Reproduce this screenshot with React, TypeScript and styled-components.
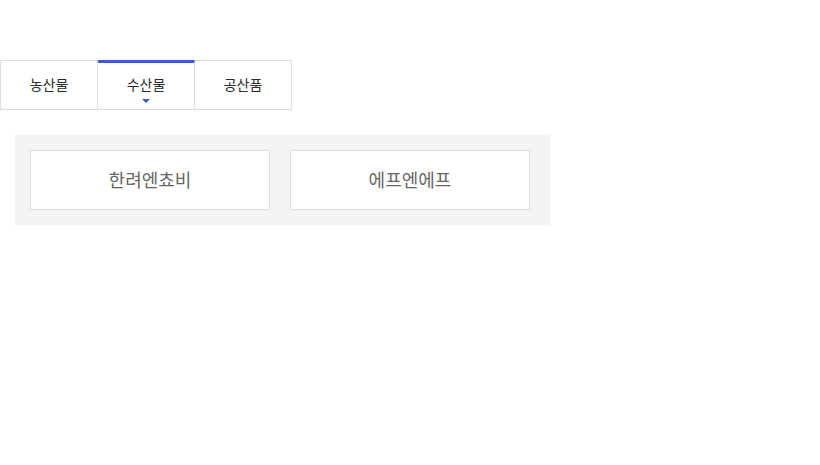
import React, { useState } from "react";
import styled, { createGlobalStyle } from "styled-components";

const GlobalStyle = createGlobalStyle`
  body {
    margin: 0;
    background: #ffffff;
    font-family: "Noto Sans CJK KR", "Noto Sans", sans-serif;
  }
`;

const Page = styled.div`
  padding-top: 60px;
`;

const TabList = styled.ul`
  display: flex;
  margin: 0;
  padding: 0;
  list-style: none;
`;

const Tab = styled.li<{ $active: boolean }>`
  position: relative;
  width: 97px;
  height: 50px;
  box-sizing: border-box;
  border: 1px solid #dddddd;
  border-left-width: 0;
  border-top: ${(p) => (p.$active ? "3px solid #3a5bd9" : "1px solid #dddddd")};
  display: flex;
  align-items: center;
  justify-content: center;
  padding-bottom: ${(p) => (p.$active ? "5px" : "3px")};
  font-size: 14px;
  color: #2b2b2b;
  cursor: pointer;

  &:first-child {
    width: 98px;
    border-left-width: 1px;
  }

  ${(p) =>
    p.$active &&
    `
    &::after {
      content: "";
      position: absolute;
      left: 50%;
      bottom: 6px;
      margin-left: -4px;
      border-left: 4px solid transparent;
      border-right: 4px solid transparent;
      border-top: 4px solid #3a5bd9;
    }
  `}
`;

const Panel = styled.div`
  margin: 25px 0 0 15px;
  width: 535px;
  box-sizing: border-box;
  padding: 15px;
  background: #f3f3f3;
  display: grid;
  grid-template-columns: 240px 240px;
  column-gap: 20px;
`;

const Card = styled.a`
  height: 60px;
  box-sizing: border-box;
  background: #ffffff;
  border: 1px solid #dddddd;
  display: flex;
  align-items: center;
  justify-content: center;
  padding-bottom: 2px;
  font-size: 18px;
  color: #666666;
  text-decoration: none;
`;

const tabs = ["농산물", "수산물", "공산품"];
const companies = ["한려엔쵸비", "에프엔에프"];

const App: React.FC = () => {
  const [active, setActive] = useState(1);

  return (
    <Page>
      <GlobalStyle />
      <TabList>
        {tabs.map((t, i) => (
          <Tab key={t} $active={i === active} onClick={() => setActive(i)}>
            {t}
          </Tab>
        ))}
      </TabList>
      <Panel>
        {companies.map((c) => (
          <Card key={c} href="#">
            {c}
          </Card>
        ))}
      </Panel>
    </Page>
  );
};

export default App;
